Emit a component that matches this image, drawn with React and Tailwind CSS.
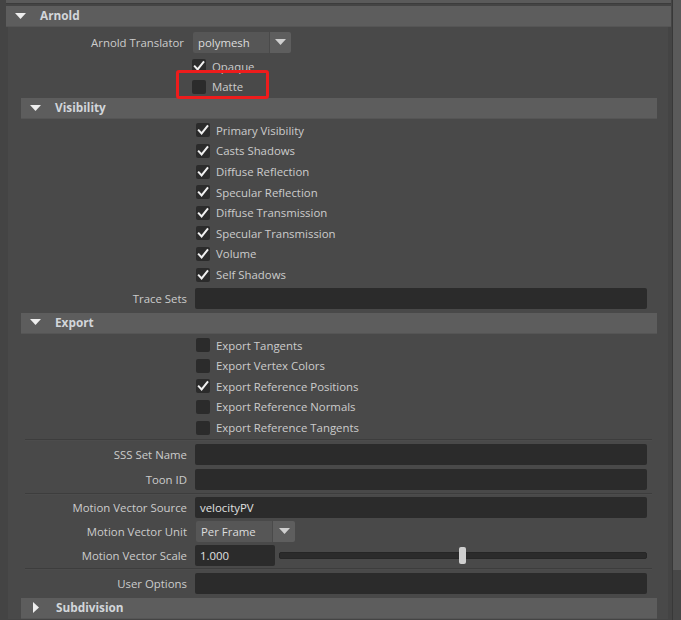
import React from "react";

const font = { fontFamily: '"Open Sans", "Noto Sans", sans-serif' };

function Check({ checked, label, left = "ml-[175px]" }) {
  return (
    <div className={`flex items-center h-[20.6px] ${left}`}>
      <div className="w-[14px] h-[14px] bg-[#2b2b2b] rounded-[2px] flex items-center justify-center">
        {checked && (
          <svg width="12" height="12" viewBox="0 0 12 12">
            <path d="M1.8 6.4 L4.6 9.4 L10.4 2.2" stroke="#f0f0f0" strokeWidth="2" fill="none" strokeLinecap="square" />
          </svg>
        )}
      </div>
      <span className="ml-[6px] text-[11.4px] text-[#cccccc] leading-none">{label}</span>
    </div>
  );
}

function Header({ title, open = true, cls = "" }) {
  return (
    <div className={`h-[21px] bg-[#5d5d5d] flex items-center border-b border-[#555] ${cls}`}>
      <svg width="11" height="7" viewBox="0 0 11 7" className={open ? "ml-[9px]" : "ml-[10px]"} style={open ? {} : { transform: "rotate(-90deg)" }}>
        <path d="M0 0 L11 0 L5.5 6 Z" fill="#eeeeee" />
      </svg>
      <span className="ml-[14px] text-[11.8px] font-bold text-[#d2d6da] leading-none">{title}</span>
    </div>
  );
}

function Label({ children }) {
  return (
    <div className="w-[166px] text-right text-[11.4px] text-[#cccccc] leading-none">{children}</div>
  );
}

function FieldRow({ label, value }) {
  return (
    <div className="flex items-center">
      <Label>{label}</Label>
      <div className="ml-[8px] w-[452px] h-[21px] bg-[#2b2b2b] rounded-[2px] flex items-center px-[5px] text-[11.4px] text-[#e0e0e0]">
        {value}
      </div>
    </div>
  );
}

function Sep() {
  return <div className="ml-[4px] w-[627px] h-[2px] border-t border-[#3d3d3d] bg-[#4c4c4c]" />;
}

function Dropdown({ text, w1, w2 }) {
  return (
    <div className="flex h-[21px] rounded-[2px] overflow-hidden">
      <div className={`${w1} bg-[#565656] flex items-center px-[5px] text-[11.4px] text-[#dddddd]`}>{text}</div>
      <div className={`${w2} bg-[#5e5e5e] border-l border-[#4a4a4a] flex items-center justify-center`}>
        <svg width="11" height="7" viewBox="0 0 11 7"><path d="M0 0 L11 0 L5.5 6 Z" fill="#cfcfcf" /></svg>
      </div>
    </div>
  );
}

export default function App() {
  return (
    <div className="w-[681px] h-[620px] bg-[#444444] flex overflow-hidden relative" style={font}>
      <div className="w-[672px] flex flex-col">
        <div className="ml-[6px] w-[665px] h-[4px] bg-[#5a5a5a] border-b border-[#3c3c3c]" />
        <div className="h-[2px]" />
        <Header title="Arnold" cls="ml-[6px] w-[665px] h-[21px]" />
        <div className="ml-[8px] w-[660px] bg-[#494949] flex flex-col">
          <div className="flex items-center mt-[5px]">
            <div className="w-[176px] text-right text-[11.4px] text-[#cccccc] leading-none">Arnold Translator</div>
            <div className="ml-[9px]">
              <Dropdown text="polymesh" w1="w-[76px]" w2="w-[22px]" />
            </div>
          </div>
          <div className="mt-[3px]">
            <Check checked label="Opaque" left="ml-[184px]" />
            <Check label="Matte" left="ml-[184px]" />
          </div>
          <div className="ml-[13px] w-[636px] flex flex-col">
            <Header title="Visibility" cls="mt-[1px]" />
            <div className="mt-[1px]">
              <Check checked label="Primary Visibility" />
              <Check checked label="Casts Shadows" />
              <Check checked label="Diffuse Reflection" />
              <Check checked label="Specular Reflection" />
              <Check checked label="Diffuse Transmission" />
              <Check checked label="Specular Transmission" />
              <Check checked label="Volume" />
              <Check checked label="Self Shadows" />
            </div>
            <div className="mt-[3px]">
              <FieldRow label="Trace Sets" />
            </div>
            <Header title="Export" cls="mt-[4px]" />
            <div className="mt-[1px]">
              <Check label="Export Tangents" />
              <Check label="Export Vertex Colors" />
              <Check checked label="Export Reference Positions" />
              <Check label="Export Reference Normals" />
              <Check label="Export Reference Tangents" />
            </div>
            <div className="mt-[1px]"><Sep /></div>
            <div className="mt-[3px] flex flex-col gap-[4px]">
              <FieldRow label="SSS Set Name" />
              <FieldRow label="Toon ID" />
            </div>
            <div className="mt-[3px]"><Sep /></div>
            <div className="mt-[2px] flex flex-col gap-[3px]">
              <FieldRow label="Motion Vector Source" value="velocityPV" />
              <div className="flex items-center">
                <Label>Motion Vector Unit</Label>
                <div className="ml-[9px]">
                  <Dropdown text="Per Frame" w1="w-[76px]" w2="w-[23px]" />
                </div>
              </div>
              <div className="flex items-center">
                <Label>Motion Vector Scale</Label>
                <div className="ml-[8px] w-[80px] h-[21px] bg-[#2b2b2b] rounded-[2px] flex items-center px-[5px] text-[11.4px] text-[#e0e0e0]">1.000</div>
                <div className="ml-[4px] w-[368px] h-[7px] bg-[#2b2b2b] rounded-[2px] border border-[#262626] relative">
                  <div className="absolute left-[179px] top-[-6px] w-[7px] h-[17px] bg-[#cfcfcf] rounded-[2px]" />
                </div>
              </div>
            </div>
            <div className="mt-[2px]"><Sep /></div>
            <div className="mt-[3px]">
              <FieldRow label="User Options" />
            </div>
            <Header title="Subdivision" open={false} cls="mt-[4px]" />
          </div>
        </div>
      </div>
      <div className="w-[9px] flex flex-col border-l border-[#383838]">
        <div className="h-[570px] bg-[#5a5a5a]" />
        <div className="flex-1 bg-[#474747]" />
      </div>
      <div className="absolute left-[176px] top-[70px] w-[93px] h-[29px] border-[3px] border-[#ee1c1c] rounded-[3px]" />
    </div>
  );
}
